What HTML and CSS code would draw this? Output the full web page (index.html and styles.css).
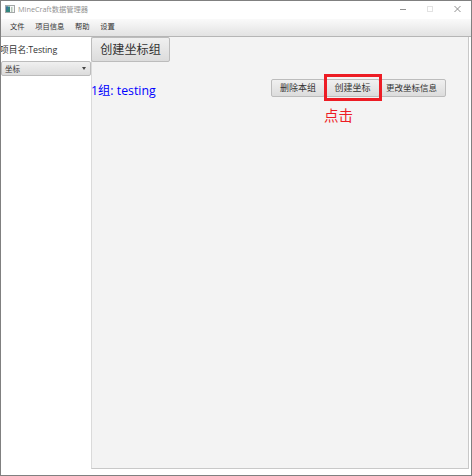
FILE: index.html
```html
<!DOCTYPE html>
<html lang="zh-CN">
<head>
<meta charset="utf-8">
<title>MineCraft数据管理器</title>
<link rel="stylesheet" href="styles.css">
</head>
<body>
<div class="window">
  <header class="titlebar">
    <svg class="app-icon" width="10" height="8" viewBox="0 0 10 8"><rect x=".5" y=".5" width="9" height="7" fill="#f7f7f7" stroke="#a4a8a8"/><rect x="1" y="1.5" width="4" height="5.5" fill="#33877f"/><rect x="1" y="1.5" width="2" height="3" fill="#3b739c"/><rect x="6" y="2" width="1.5" height="5" fill="#b5c8b8"/></svg>
    <span class="title">MineCraft数据管理器</span>
    <svg class="controls" width="62" height="8" viewBox="0 0 62 8" fill="none"><path d="M0 4.5h6" stroke="#929292"/><rect x="27.5" y="1.5" width="5" height="5" stroke="#e2e2e2"/><path d="M54.5 1l6 6m0-6l-6 6" stroke="#8e8e8e"/></svg>
  </header>
  <nav class="menubar"><span>文件</span><span>项目信息</span><span>帮助</span><span>设置</span></nav>
  <main class="body">
    <aside class="sidebar">
      <div class="project">项目名:<span class="project-name">Testing</span></div>
      <div class="combo"><span>坐标</span><i class="arrow"></i></div>
    </aside>
    <section class="content">
      <button class="btn create-group">创建坐标组</button>
      <div class="group-row">
        <span class="group-name">1组: testing</span>
        <div class="actions">
          <button class="btn delete">删除本组</button>
          <button class="btn create">创建坐标</button>
          <button class="btn edit">更改坐标信息</button>
          <div class="callout"><span>点击</span></div>
        </div>
      </div>
    </section>
  </main>
</div>
</body>
</html>
```
FILE: styles.css
```css
* { box-sizing: border-box; }
body { margin: 0; font-family: "Open Sans", "Noto Sans CJK SC", sans-serif; color: #333; }
.window { width: 472px; height: 476px; border: 1px solid #808080; background: #fff; display: flex; flex-direction: column; overflow: hidden; white-space: nowrap; }
.titlebar { height: 18px; display: flex; align-items: center; padding: 0 9px 2px 4px; flex: none; }
.title { margin-left: 3px; font-size: 7.3px; line-height: 12px; color: #929292; }
.controls { margin-left: auto; }
.menubar { height: 18px; flex: none; display: flex; gap: 10.6px; padding-left: 9px; font-size: 7.3px; line-height: 15px; background: linear-gradient(#fafafa, #e2e2e2); border-bottom: 1px solid #b5b5b5; }
.body { flex: 1; display: flex; }
.sidebar { width: 90px; flex: none; }
.project { height: 24px; margin-left: -1px; line-height: 25px; font-size: 8.7px; }
.project-name { font-size: 8.9px; letter-spacing: -0.15px; }
.combo { width: 90px; height: 15px; border: 1px solid #bcbcbc; border-radius: 2px; background: linear-gradient(#f0f0f0, #dcdcdc); display: flex; justify-content: space-between; align-items: center; padding: 0 4px 0 3px; font-size: 7.5px; line-height: 12px; }
.arrow { border: 2.5px solid transparent; border-top: 3px solid #444; border-bottom: 0; }
.content { width: 378px; height: 432px; background: #f3f3f3; border: 1px solid #c8c8c8; border-left-color: #dadada; border-top: 0; display: flex; flex-direction: column; align-items: flex-start; }
.btn { margin: 0; padding: 0; border: 1px solid #bcbcbc; border-radius: 2px; background: linear-gradient(#f0f0f0, #dcdcdc); font-family: inherit; color: #333; white-space: nowrap; }
.create-group { width: 79px; height: 25px; margin-left: -1px; font-size: 12.1px; line-height: 23px; }
.group-row { width: 100%; height: 19px; margin-top: 17px; display: flex; justify-content: space-between; padding-right: 22px; }
.group-name { margin-left: -1px; font-size: 12.3px; line-height: 23px; color: #00f; }
.actions { position: relative; display: flex; }
.actions .btn { height: 18px; font-size: 9px; line-height: 16px; }
.actions .delete { width: 54px; }
.actions .create { width: 55px; }
.actions .edit { width: 66px; padding-right: 3px; font-size: 8.5px; }
.callout { position: absolute; left: 53px; top: -5px; width: 58px; height: 27px; border: 3px solid #ed1c24; }
.callout span { position: absolute; left: -3px; top: 30px; font-size: 14.5px; line-height: 18px; color: #ed1c24; }
```
